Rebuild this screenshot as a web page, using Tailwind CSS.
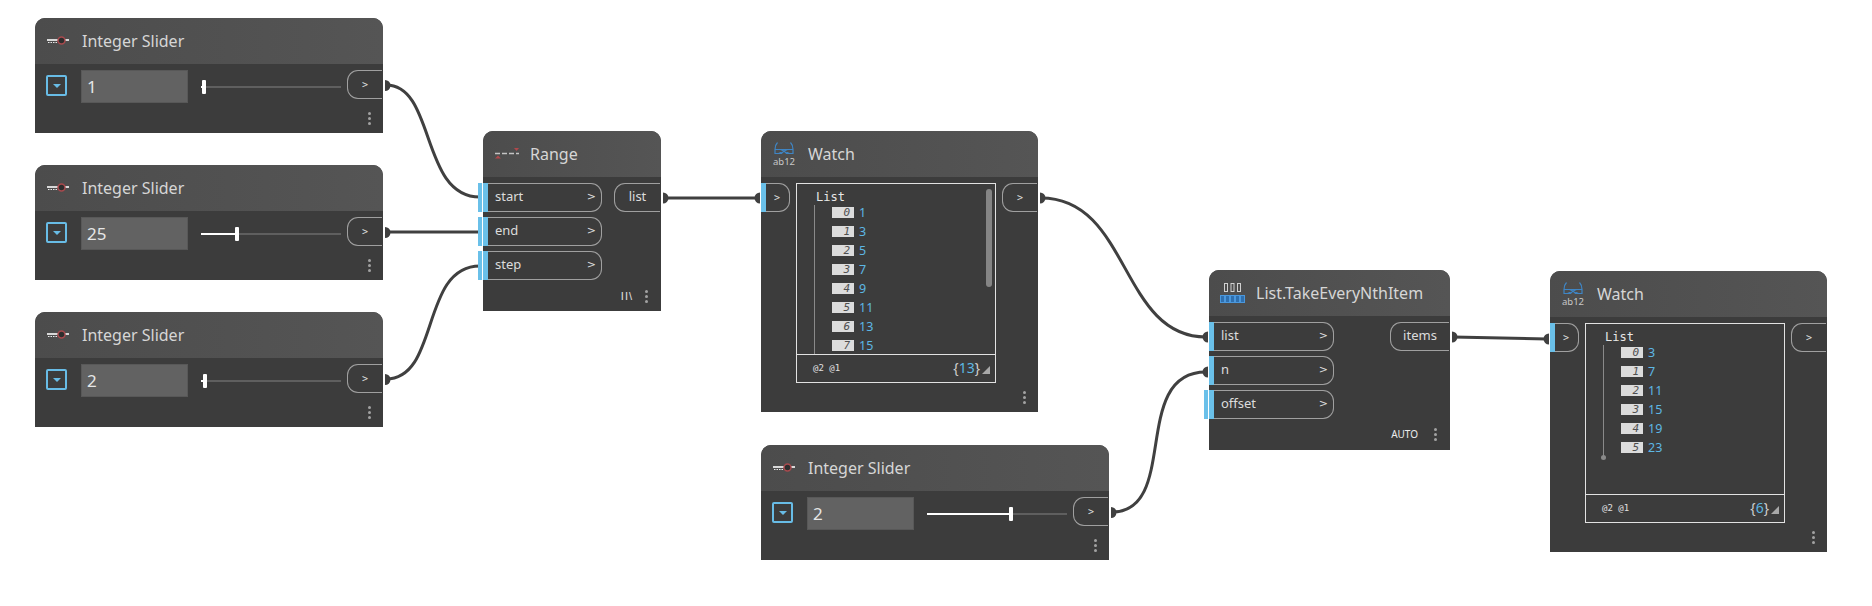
<!DOCTYPE html>
<html lang="en">
<head>
  <meta charset="UTF-8">
  <title>Dynamo graph</title>
  <script src="https://cdn.jsdelivr.net/npm/@tailwindcss/browser@4"></script>
</head>
<body class="bg-white font-['Noto_Sans',sans-serif]">
  <div id="canvas" class="relative w-[1872px] h-[606px] overflow-hidden">
    <!-- wires go under the nodes -->
    <svg class="absolute left-0 top-0" width="1872" height="606" fill="none" stroke="#404040" stroke-width="3">
      <path d="M386 85C436 85 420 197 480 197"/>
      <path d="M386 232H480"/>
      <path d="M386 379C440 379 420 266 480 266"/>
      <path d="M663 198H758"/>
      <path d="M1041 198C1130 198 1120 337 1206 337"/>
      <path d="M1112 512C1180 512 1130 372 1206 372"/>
      <path d="M1453 337L1547 339"/>
      <g fill="#404040" stroke="none">
        <path d="M385 80a5.5 5.5 0 0 1 0 11z"/>
        <path d="M385 227a5.5 5.5 0 0 1 0 11z"/>
        <path d="M385 374a5.5 5.5 0 0 1 0 11z"/>
        <path d="M663 192.500a5.500 5.500 0 0 1 0 11z"/>
        <path d="M1040 192.500a5.500 5.500 0 0 1 0 11z"/>
        <path d="M1111 507a5.500 5.500 0 0 1 0 11z"/>
        <path d="M1452 331.500a5.500 5.500 0 0 1 0 11z"/>
        <path d="M760 192.500a5.500 5.500 0 0 0 0 11z"/>
        <path d="M1208 331.500a5.500 5.500 0 0 0 0 11z"/>
        <path d="M1208 366.500a5.500 5.500 0 0 0 0 11z"/>
        <path d="M1549 333.500a5.500 5.500 0 0 0 0 11z"/>
      </g>
    </svg>
  </div>

  <script>
    const sliderIcon = `<svg width="24" height="14" viewBox="0 0 24 14" class="shrink-0"><path d="M0 6h22" stroke="#d8d8d8" stroke-width="2"/><path d="M1 8.500h11" stroke="#e8e8e8" stroke-width="1" stroke-dasharray="1.500 1"/><circle cx="14.500" cy="6.500" r="3.500" fill="#2e2e2e" stroke="#a84a4e" stroke-width="1.500"/></svg>`
    const rangeIcon = `<svg width="26" height="14" viewBox="0 0 26 14" class="shrink-0"><path d="M1 6.500h24" stroke="#c4c4c4" stroke-width="1.500" stroke-dasharray="5 2"/><path d="M1 11.500l3-3 3 3z" fill="#b0484c"/><path d="M20 1h5l-2.500 3z" fill="#b0484c"/></svg>`
    const watchIcon = `<div class="relative w-[20px] h-[22px] shrink-0"><svg width="20" height="16" viewBox="0 0 20 16" class="absolute left-0 -top-px" fill="none" stroke="#3f85c4" stroke-width="1.200"><path d="M3.500 0.500C1.500 2.500 1 5 1 7.500v4h6.500L10 9l2.500 2.500H19v-4c0-2.500-.5-5-2.500-7"/><path d="M1 7.500h18M4.500 11.500l9-4M15.500 11.500l-9-4"/></svg><span class="absolute -left-px top-[14px] text-[9.500px] leading-[10px] text-[#c8c8c8]">ab12</span></div>`
    const listIcon = `<svg width="25" height="20" viewBox="0 0 25 20" class="shrink-0" fill="none"><g stroke="#d0d0d0" stroke-width="1"><rect x="4.500" y="0.500" width="3" height="8"/><rect x="11" y="0.500" width="3" height="8"/><rect x="17.500" y="0.500" width="3" height="8"/></g><g fill="#2f6fae" stroke="#4a97dc" stroke-width="1"><rect x="0.500" y="12.500" width="4" height="7"/><rect x="5.500" y="12.500" width="4" height="7"/><rect x="10.500" y="12.500" width="4" height="7"/><rect x="15.500" y="12.500" width="4" height="7"/><rect x="20.500" y="12.500" width="4" height="7"/></g></svg>`

    const dots = `<div class="flex flex-col gap-[2px]"><i class="block w-[3px] h-[3px] rounded-full bg-[#a2a2a2]"></i><i class="block w-[3px] h-[3px] rounded-full bg-[#a2a2a2]"></i><i class="block w-[3px] h-[3px] rounded-full bg-[#a2a2a2]"></i></div>`

    function header(icon, title, iconLeft) {
      return `<div class="flex items-center h-[46px] rounded-t-[10px] bg-gradient-to-r from-[#4c4c4c] to-[#555555]">
        <div class="flex w-[47px] shrink-0" style="padding-left:${iconLeft}px">${icon}</div>
        <span class="text-[16px] text-[#d6d6d6] whitespace-nowrap">${title}</span>
      </div>`
    }

    function place(x, y, w, h, html) {
      const node = document.createElement('div')
      node.className = 'absolute flex flex-col bg-[#3c3c3c] rounded-t-[10px]'
      node.style.cssText = `left:${x}px;top:${y}px;width:${w}px;height:${h}px`
      node.innerHTML = html
      document.getElementById('canvas').appendChild(node)
    }

    function outPort(w, label) {
      return `<div class="flex items-center justify-center h-[29px] border-y border-l border-[#a0a0a0] rounded-l-[11px] text-[#dcdcdc] ${label === '>' ? "text-[10px] font-['DejaVu_Sans_Mono',monospace]" : 'text-[13px]'}" style="width:${w}px"><span class="-mt-px">${label}</span></div>`
    }

    function inPort(w, label, extra) {
      return `<div class="relative flex items-center h-[29px] border-y border-r border-[#a0a0a0] rounded-r-[11px] text-[13px] text-[#dcdcdc]" style="width:${w}px">
        ${extra ? '<i class="absolute -left-[5px] -top-px -bottom-px w-[4px] bg-[#6ac0e9]"></i>' : ''}
        <i class="self-stretch -my-px w-[5px] bg-[#6ac0e9]"></i>
        <span class="ml-[7px] -mt-[2px]">${label}</span>
        <span class="ml-auto mr-[5px] -mt-px text-[11px] font-['DejaVu_Sans',sans-serif]">&gt;</span>
      </div>`
    }

    function slider(x, y, value, thumb) {
      place(x, y, 348, 115, header(sliderIcon, 'Integer Slider', 12) + `
        <div class="flex items-start pl-[11px] pt-[6px]">
          <div class="flex items-center justify-center w-[21px] h-[21px] mt-[5px] border-2 border-[#68bce6] rounded-[2px]">
            <i class="block w-0 h-0 border-x-[4px] border-x-transparent border-t-[4px] border-t-[#68bce6]"></i>
          </div>
          <div class="flex items-center w-[107px] h-[33px] ml-[14px] pl-[5px] bg-[#626262] border border-[#585858] text-[17px] text-[#e6e6e6]">${value}</div>
          <div class="relative w-[140px] h-[33px] ml-[13px]">
            <i class="absolute left-0 right-0 top-[16px] h-[2px] bg-[#5f5f5f]"></i>
            <i class="absolute left-0 top-[16px] h-[2px] bg-white" style="width:${thumb}px"></i>
            <i class="absolute top-[10px] w-[4px] h-[14px] bg-white rounded-[1px]" style="left:${thumb - 1}px"></i>
          </div>
          <div class="ml-[6px]">${outPort(35, '>')}</div>
        </div>
        <div class="flex justify-end pr-[12px] mt-[9px]">${dots}</div>`)
    }

    function watch(x, y, items, count, closed) {
      const rows = items.map((v, i) => `
        <div class="flex items-center h-[11px] mb-[8px]">
          <span class="w-[22px] h-[11px] pr-[4px] text-right bg-[#dcdcdc] text-[#505050] italic text-[11px] leading-[11px] font-['DejaVu_Sans_Mono',monospace]">${i}</span>
          <span class="ml-[5px] text-[12.500px] leading-[11px] text-[#5db7e4]">${v}</span>
        </div>`).join('')
      place(x, y, 277, 281, header(watchIcon, 'Watch', 13) + `
        <div class="flex items-start pt-[6px]">
          <div class="relative flex items-center h-[29px] w-[29px] border-y border-r border-[#a0a0a0] rounded-r-[11px] text-[10px] text-[#dcdcdc] font-['DejaVu_Sans_Mono',monospace]">
            <i class="self-stretch -my-px w-[5px] bg-[#6ac0e9]"></i><span class="ml-[8px] -mt-px">&gt;</span>
          </div>
          <div class="flex flex-col w-[200px] h-[200px] ml-[6px] border border-[#e2e2e2]">
            <div class="relative h-[170px] overflow-hidden">
              <div class="pl-[19px] pt-[5px] text-[12px] leading-[16px] text-[#e8e8e8] font-['DejaVu_Sans_Mono',monospace]">List</div>
              <i class="absolute left-[17px] top-[21px] w-px bg-[#8a8a8a] ${closed ? 'h-[111px]' : 'bottom-0'}"></i>
              ${closed ? '<i class="absolute left-[15px] top-[131px] w-[5px] h-[5px] rounded-full bg-[#8a8a8a]"></i>' : '<i class="absolute left-[189px] top-[5px] w-[6px] h-[98px] rounded-[3px] bg-[#858585]"></i>'}
              <div class="pl-[35px] pt-[2px]">${rows}</div>
            </div>
            <div class="flex items-center h-[28px] pl-[16px] pr-[5px] border-t border-[#e2e2e2]">
              <span class="text-[9px] text-[#e0e0e0] font-['DejaVu_Sans_Mono',monospace]">@2 @1</span>
              <span class="ml-auto -mt-[2px] text-[14px] text-[#cfcfcf]">{<span class="text-[#5db7e4]">${count}</span>}</span>
              <svg width="8" height="8" viewBox="0 0 8 8" class="ml-[2px] mt-[3px]"><path d="M8 0v8H0z" fill="#a8a8a8"/></svg>
            </div>
          </div>
          <div class="ml-[6px]">${outPort(35, '>')}</div>
        </div>
        <div class="flex justify-end pr-[12px] mt-[8px]">${dots}</div>`)
    }

    slider(35, 18, '1', 2)
    slider(35, 165, '25', 35)
    slider(35, 312, '2', 3)
    slider(761, 445, '2', 83)

    place(483, 131, 178, 180, header(rangeIcon, 'Range', 11) + `
      <div class="flex items-start pt-[6px]">
        <div class="flex flex-col gap-[5px]">${inPort(119, 'start', true)}${inPort(119, 'end', true)}${inPort(119, 'step', true)}</div>
        <div class="ml-[12px]">${outPort(46, 'list')}</div>
      </div>
      <div class="flex items-center justify-end pr-[13px] mt-[10px]">
        <span class="mr-[12px] text-[11px] leading-[13px] text-[#e0e0e0] font-['Liberation_Sans',sans-serif] tracking-[1px]">II\\</span>${dots}
      </div>`)

    watch(761, 131, [1, 3, 5, 7, 9, 11, 13, 15], 13, false)

    place(1209, 270, 241, 180, header(listIcon, 'List.TakeEveryNthItem', 11) + `
      <div class="flex items-start pt-[6px]">
        <div class="flex flex-col gap-[5px]">${inPort(125, 'list', false)}${inPort(125, 'n', false)}${inPort(125, 'offset', true)}</div>
        <div class="ml-[56px]">${outPort(59, 'items')}</div>
      </div>
      <div class="flex items-center justify-end pr-[13px] mt-[9px]">
        <span class="mr-[16px] text-[10px] leading-[13px] text-[#ececec]">AUTO</span>${dots}
      </div>`)

    watch(1550, 271, [3, 7, 11, 15, 19, 23], 6, true)
  </script>
</body>
</html>
